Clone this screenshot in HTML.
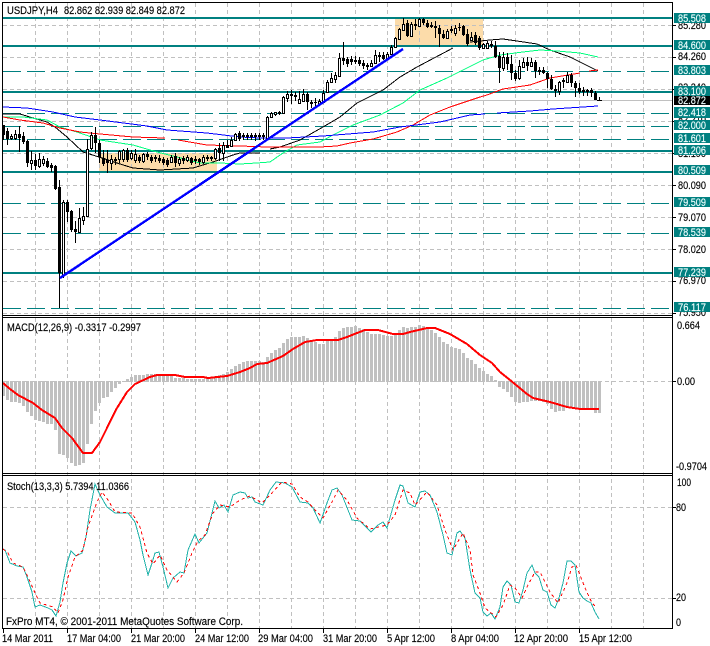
<!DOCTYPE html>
<html><head><meta charset="utf-8"><style>
html,body{margin:0;padding:0;background:#fff;width:710px;height:646px;overflow:hidden}
svg{display:block}
text{font-family:"Liberation Sans",sans-serif;font-size:11px;fill:#000;stroke:#000;stroke-width:.15}
.l text{fill:#f0ffff;stroke:#f0ffff}
</style></head><body>
<svg width="710" height="646" viewBox="0 0 710 646" xmlns="http://www.w3.org/2000/svg">
<rect width="710" height="646" fill="#fff"/>
<g fill="#fcdcaa"><rect x="395" y="18" width="88" height="27"/><rect x="99" y="153" width="118" height="18"/></g>
<g shape-rendering="crispEdges" fill="none">
<path stroke="#c0c0c0" stroke-dasharray="4 3" d="M35.5 3V628M67.5 3V628M99.5 3V628M131.5 3V628M163.5 3V628M195.5 3V628M227.5 3V628M259.5 3V628M291.5 3V628M323.5 3V628M355.5 3V628M387.5 3V628M419.5 3V628M451.5 3V628M483.5 3V628M515.5 3V628M547.5 3V628M579.5 3V628M611.5 3V628M643.5 3V628"/>
<path stroke="#c0c0c0" stroke-dasharray="4 3" d="M3 25.5H672M3 57.5H672M3 89.5H672M3 121.5H672M3 153.5H672M3 185.5H672M3 217.5H672M3 249.5H672M3 281.5H672M3 313.5H672M3 381.5H672M3 507.5H672M3 598.5H672"/>
<path stroke="#c0c0c0" d="M3 100.5H672"/>
<path stroke="#008080" stroke-width="2" d="M3 18H672M3 46H672M3 92H672M3 151H672M3 172H672M3 273H672"/>
<path stroke="#008080" stroke-dasharray="18 6" d="M3 71.5H672M3 113.5H672M3 126.5H672M3 139.5H672M3 203.5H672M3 233.5H672M3 308.5H672"/>
<path stroke="#000" d="M3 114L20 114L33 118L47 122L55 127L67 137L83 152L99 157L120 164L133 168L160 170L193 168L213 162L233 155L240 153L260 153M270 149L280 147L300 140L323 127L340 117L357 103L383 90L400 77L417 67L453 48M470 42L490 40L503 39L517 41L537 44L550 50L570 57L598 71"/>
<path stroke="#00ff7f" d="M3 117L23 117L47 120L60 127L80 133L100 140L133 145L157 152L177 157L200 163L220 163L240 164L257 163L270 162L283 153L297 145L320 142L333 135L353 125L380 115L403 103L420 90L447 78L467 68L483 60L500 55L523 52L540 50L557 51L580 53L598 57"/>
<path stroke="#f00" d="M3 117L20 120L43 123L60 128L80 132L100 134L133 137L165 138M178 140L207 145L240 146L267 147L320 147L337 146L350 143L373 139L397 132L413 125L430 115L450 107L480 97L487 95L503 89L530 85L550 78L580 73M589 71L598 70"/>
<path stroke="#00f" d="M3 107L27 108L53 112L75 117L100 120L147 126L167 130L207 133L240 137L260 138L287 138L323 136L373 132L400 127L440 122L470 115L485 114M497 113L530 111L553 109L598 106"/>
<path stroke="#000" d="M3.5 125V140M7.5 128V145M11.5 134V140M15.5 130V140M19.5 126V152M23.5 132V144M27.5 140V167M31.5 151V170M35.5 154V170M39.5 153V168M43.5 156V166M47.5 158V168M51.5 163V172M55.5 165V190M59.5 180V308M63.5 200V278M67.5 200V222M71.5 210V232M75.5 221V243M79.5 208V233M83.5 207V225M87.5 139V217M91.5 132V150M95.5 127V153M99.5 140V163M103.5 150V166M107.5 150V173M111.5 155V170M115.5 157V165M119.5 150V163M123.5 149V162M127.5 148V162M131.5 150V160M135.5 149V163M139.5 155V163M143.5 153V163M147.5 152V160M151.5 155V163M155.5 155V162M159.5 155V163M163.5 157V165M167.5 158V167M171.5 155V163M175.5 153V167M179.5 157V166M183.5 156V164M187.5 155V162M191.5 157V165M195.5 156V164M199.5 158V165M203.5 155V164M207.5 155V161M211.5 156V161M215.5 148V160M219.5 143V161M223.5 142V161M227.5 140V148M231.5 137V147M235.5 133V141M239.5 131V141M243.5 133V140M247.5 133V140M251.5 133V140M255.5 133V141M259.5 133V140M263.5 133V140M267.5 116V139M271.5 112V118M275.5 112V116M279.5 111V115M283.5 96V114M287.5 91V102M291.5 90V104M295.5 92V101M299.5 91V104M303.5 89V102M307.5 92V110M311.5 100V108M315.5 98V108M319.5 99V105M323.5 90V103M327.5 80V93M331.5 73V83M335.5 72V83M339.5 53V77M343.5 42V65M347.5 57V67M351.5 56V65M355.5 56V64M359.5 57V66M363.5 60V69M367.5 63V70M371.5 60V67M375.5 50V64M379.5 52V62M383.5 52V60M387.5 52V60M391.5 45V55M395.5 37V48M399.5 28V40M403.5 18V31M407.5 20V37M411.5 22V37M415.5 19V30M419.5 18V27M423.5 18V25M427.5 20V28M431.5 22V28M435.5 21V38M439.5 25V47M443.5 30V39M447.5 29V39M451.5 26V33M455.5 25V36M459.5 23V31M463.5 25V36M467.5 29V46M471.5 32V41M475.5 32V45M479.5 36V50M483.5 43V49M487.5 41V49M491.5 41V48M495.5 41V58M499.5 52V83M503.5 52V71M507.5 53V70M511.5 55V80M515.5 70V81M519.5 60V80M523.5 58V68M527.5 57V71M531.5 58V67M535.5 60V78M539.5 67V75M543.5 67V74M547.5 72V88M551.5 75V90M555.5 85V97M559.5 81V95M563.5 78V88M567.5 72V83M571.5 73V87M575.5 81V97M579.5 83V94M583.5 87V96M587.5 89V96M591.5 88V97M595.5 91V100M599.5 97V101M597 100.5H602"/>
<path fill="#000" stroke="none" d="M3 125h2v10h-2zM6 131h3v8h-3zM18 134h3v4h-3zM22 136h3v6h-3zM26 141h3v22h-3zM34 160h3v6h-3zM46 161h3v6h-3zM50 165h3v3h-3zM54 166h3v23h-3zM58 187h3v86h-3zM66 202h3v10h-3zM70 211h3v19h-3zM74 229h3v3h-3zM94 135h3v8h-3zM98 143h3v14h-3zM102 158h3v6h-3zM106 160h3v3h-3zM126 150h3v10h-3zM138 157h3v4h-3zM146 154h3v3h-3zM150 157h3v4h-3zM154 157h3v2h-3zM158 158h3v3h-3zM162 159h3v4h-3zM166 160h3v5h-3zM174 156h3v7h-3zM182 158h3v3h-3zM190 158h3v5h-3zM194 159h3v2h-3zM198 159h3v3h-3zM206 157h3v2h-3zM210 157h3v2h-3zM218 148h3v5h-3zM226 145h3v3h-3zM238 133h3v6h-3zM242 135h3v2h-3zM246 135h3v2h-3zM250 135h3v2h-3zM254 135h3v2h-3zM258 135h3v2h-3zM262 135h3v2h-3zM290 94h3v2h-3zM294 95h3v2h-3zM306 94h3v8h-3zM310 102h3v2h-3zM314 102h3v1h-3zM342 58h3v3h-3zM346 59h3v5h-3zM350 59h3v3h-3zM354 60h3v2h-3zM358 60h3v4h-3zM362 63h3v3h-3zM366 65h3v2h-3zM378 55h3v2h-3zM382 55h3v4h-3zM406 23h3v13h-3zM414 24h3v2h-3zM422 19h3v4h-3zM426 23h3v4h-3zM430 25h3v2h-3zM434 26h3v2h-3zM438 28h3v6h-3zM442 34h3v4h-3zM450 29h3v2h-3zM458 27h3v1h-3zM462 26h3v9h-3zM466 34h3v10h-3zM474 35h3v8h-3zM478 38h3v10h-3zM490 44h3v2h-3zM494 46h3v11h-3zM498 56h3v12h-3zM506 57h3v7h-3zM510 64h3v9h-3zM514 73h3v6h-3zM526 62h3v4h-3zM534 62h3v9h-3zM538 70h3v2h-3zM542 70h3v3h-3zM546 73h3v6h-3zM550 79h3v10h-3zM554 89h3v2h-3zM562 80h3v2h-3zM570 75h3v8h-3zM574 83h3v5h-3zM578 88h3v4h-3zM582 90h3v2h-3zM586 90h3v2h-3zM590 90h3v3h-3zM594 93h3v7h-3z"/>
<path fill="#fff" stroke="#000" d="M10.5 136.5h2v2h-2zM14.5 134.5h2v4h-2zM30.5 160.5h2v3h-2zM38.5 159.5h2v7h-2zM42.5 159.5h2v4h-2zM62.5 202.5h2v73h-2zM78.5 218.5h2v14h-2zM82.5 216.5h2v4h-2zM86.5 149.5h2v67h-2zM90.5 135.5h2v13h-2zM110.5 159.5h2v4h-2zM114.5 159.5h2v1h-2zM118.5 151.5h2v8h-2zM122.5 150.5h2v9h-2zM130.5 153.5h2v5h-2zM134.5 154.5h2v6h-2zM142.5 154.5h2v7h-2zM170.5 157.5h2v5h-2zM178.5 159.5h2v4h-2zM186.5 157.5h2v3h-2zM202.5 157.5h2v5h-2zM214.5 149.5h2v9h-2zM222.5 145.5h2v8h-2zM230.5 140.5h2v6h-2zM234.5 134.5h2v6h-2zM266.5 117.5h2v21h-2zM270.5 113.5h2v4h-2zM274.5 112.5h2v2h-2zM278.5 112.5h2v1h-2zM282.5 97.5h2v16h-2zM286.5 94.5h2v4h-2zM298.5 99.5h2v4h-2zM302.5 94.5h2v7h-2zM318.5 101.5h2v3h-2zM322.5 93.5h2v9h-2zM326.5 82.5h2v10h-2zM330.5 78.5h2v4h-2zM334.5 75.5h2v4h-2zM338.5 58.5h2v18h-2zM370.5 63.5h2v3h-2zM374.5 55.5h2v8h-2zM386.5 54.5h2v4h-2zM390.5 47.5h2v7h-2zM394.5 38.5h2v9h-2zM398.5 29.5h2v10h-2zM402.5 24.5h2v6h-2zM410.5 24.5h2v12h-2zM418.5 19.5h2v7h-2zM446.5 31.5h2v7h-2zM454.5 28.5h2v5h-2zM470.5 37.5h2v3h-2zM482.5 44.5h2v4h-2zM486.5 43.5h2v5h-2zM502.5 57.5h2v11h-2zM518.5 66.5h2v12h-2zM522.5 62.5h2v5h-2zM530.5 62.5h2v4h-2zM558.5 82.5h2v9h-2zM566.5 75.5h2v7h-2z"/>
<path stroke="#c0c0c0" stroke-width="3" d="M3.5 381V396M7.5 381V400M11.5 381V402M15.5 381V402M19.5 381V403M23.5 381V406M27.5 381V412M31.5 381V416M35.5 381V420M39.5 381V421M43.5 381V422M47.5 381V424M51.5 381V424M55.5 381V430M59.5 381V454M63.5 381V455M67.5 381V458M71.5 381V463M75.5 381V466M79.5 381V465M83.5 381V463M87.5 381V444M91.5 381V424M95.5 381V411M99.5 381V403M103.5 381V398M107.5 381V397M111.5 381V392M115.5 381V388M119.5 381V384M123.5 381V382M127.5 382V379M131.5 382V377M135.5 382V375M139.5 382V375M143.5 382V375M147.5 382V374M151.5 382V374M155.5 382V374M159.5 382V375M163.5 382V376M167.5 382V376M171.5 382V376M175.5 382V378M179.5 382V378M183.5 382V378M187.5 382V379M191.5 382V379M195.5 382V379M199.5 382V379M203.5 382V379M207.5 382V378M211.5 382V378M215.5 382V376M219.5 382V375M223.5 382V374M227.5 382V372M231.5 382V369M235.5 382V366M239.5 382V364M243.5 382V362M247.5 382V361M251.5 382V361M255.5 382V361M259.5 382V361M263.5 382V362M267.5 382V357M271.5 382V353M275.5 382V350M279.5 382V348M283.5 382V343M287.5 382V339M291.5 382V337M295.5 382V337M299.5 382V337M303.5 382V336M307.5 382V338M311.5 382V340M315.5 382V342M319.5 382V344M323.5 382V344M327.5 382V340M331.5 382V341M335.5 382V337M339.5 382V331M343.5 382V328M347.5 382V327M351.5 382V327M355.5 382V326M359.5 382V328M363.5 382V329M367.5 382V332M371.5 382V334M375.5 382V334M379.5 382V334M383.5 382V335M387.5 382V336M391.5 382V336M395.5 382V335M399.5 382V330M403.5 382V327M407.5 382V328M411.5 382V327M415.5 382V327M419.5 382V325M423.5 382V326M427.5 382V328M431.5 382V330M435.5 382V333M439.5 382V337M443.5 382V342M447.5 382V344M451.5 382V347M455.5 382V348M459.5 382V349M463.5 382V353M467.5 382V358M471.5 382V360M475.5 382V364M479.5 382V368M483.5 382V371M487.5 382V374M491.5 382V376M495.5 382V380M499.5 381V387M503.5 381V389M507.5 381V392M511.5 381V397M515.5 381V402M519.5 381V403M523.5 381V402M527.5 381V402M531.5 381V401M535.5 381V401M539.5 381V401M543.5 381V402M547.5 381V404M551.5 381V409M555.5 381V412M559.5 381V411M563.5 381V411M567.5 381V407M571.5 381V407M575.5 381V408M579.5 381V408M583.5 381V409M587.5 381V410M591.5 381V410M595.5 381V413M599.5 381V413"/>
<path stroke="#f00" stroke-width="2" d="M3 383L10 389L18 395L33 403L42 410L55 418L62 428L72 438L83 453L92 453L100 442L107 428L117 408L127 392L135 384L150 377L157 375L175 375L185 377L203 377L208 378L227 376L240 372L250 368L257 364L267 363L283 356L293 349L305 342L317 340L325 340L338 340L347 337L357 333L365 330L378 330L393 334L403 334L410 332L427 328L435 328L450 334L467 344L480 355L483 357L492 363L500 372L510 380L527 394L533 398L550 402L567 407L580 409L599 409"/>
<path stroke="#20b2aa" d="M3 549L5 550L10 563L17 566L23 567L27 577L32 592L35 607L40 605L48 608L52 610L56 616L60 602L63 583L67 563L71 551L76 556L82 553L86 537L90 510L95 484L100 495L107 507L115 513L128 513L135 522L140 540L143 555L148 575L152 563L155 553L159 552L163 567L168 588L173 578L180 572L184 573L188 550L195 534L199 543L207 533L215 501L219 508L224 505L228 512L233 495L240 492L245 493L248 498L252 497L255 502L263 505L270 490L276 482L285 483L292 487L300 502L308 503L313 508L320 523L327 503L332 490L337 488L342 495L352 520L360 521L371 532L378 525L383 522L387 528L395 500L400 485L403 486L408 503L415 507L420 492L425 491L430 495L437 512L443 535L447 553L452 555L457 533L460 531L465 538L470 570L475 593L480 598L483 612L487 616L491 613L495 619L500 607L503 587L507 581L511 585L515 602L519 603L523 590L527 573L532 565L535 573L539 577L543 590L547 592L551 605L555 608L559 598L563 583L567 561L571 561L575 565L579 592L583 598L587 601L591 603L595 612L599 619"/>
<path stroke="#f00" stroke-dasharray="3 3" d="M3 549L8 553L13 563L23 567L28 577L35 593L40 603L53 607L58 613L63 600L68 577L75 557L83 550L88 527L97 502L102 492L108 500L115 512L132 513L140 527L147 553L153 564L160 555L167 570L177 582L184 573L192 553L198 541L205 535L213 513L220 505L230 507L240 500L250 496L262 503L270 495L282 482L292 484L300 497L308 502L317 512L323 518L332 502L338 490L347 500L357 518L370 529L387 525L395 515L403 490L410 493L415 505L427 492L437 505L445 530L453 550L463 533L470 550L473 575L480 593L485 608L490 612L496 617L503 605L510 585L515 588L522 598L528 585L535 572L540 572L550 592L558 603L567 583L572 567L576 565L585 588L592 603L597 608"/>
<path stroke="#00f" stroke-width="2.4" d="M60 278L403 49"/>
<path stroke="#000" d="M2.5 2V628.5M2 2.5H672.5M672.5 2V629M2 315.5H673M2 317.5H673M2 473.5H673M2 475.5H673M2 628.5H673"/>
<path stroke="#000" d="M3.5 629V633M67.5 629V633M131.5 629V633M195.5 629V633M259.5 629V633M323.5 629V633M387.5 629V633M451.5 629V633M515.5 629V633M579.5 629V633M673 25.5H676M673 57.5H676M673 89.5H676M673 121.5H676M673 153.5H676M673 185.5H676M673 217.5H676M673 249.5H676M673 281.5H676M673 313.5H676M673 381.5H676M673 507.5H676M673 598.5H676"/>
</g>
<g>
<text x="678" y="29" textLength="28" lengthAdjust="spacingAndGlyphs">85.280</text>
<text x="678" y="60" textLength="28" lengthAdjust="spacingAndGlyphs">84.260</text>
<text x="678" y="91" textLength="28" lengthAdjust="spacingAndGlyphs">83.240</text>
<text x="678" y="123" textLength="28" lengthAdjust="spacingAndGlyphs">82.210</text>
<text x="678" y="157" textLength="28" lengthAdjust="spacingAndGlyphs">81.190</text>
<text x="678" y="189" textLength="28" lengthAdjust="spacingAndGlyphs">80.090</text>
<text x="678" y="221" textLength="28" lengthAdjust="spacingAndGlyphs">79.070</text>
<text x="678" y="253" textLength="28" lengthAdjust="spacingAndGlyphs">78.020</text>
<text x="678" y="284" textLength="28" lengthAdjust="spacingAndGlyphs">76.970</text>
<text x="678" y="316" textLength="28" lengthAdjust="spacingAndGlyphs">75.950</text>
</g>
<g shape-rendering="crispEdges" fill="#008080">
<rect x="674" y="13" width="36" height="10"/><rect x="674" y="40" width="36" height="10"/><rect x="674" y="65" width="36" height="10"/><rect x="674" y="86" width="36" height="10"/><rect x="674" y="107" width="36" height="11"/><rect x="674" y="120" width="36" height="10"/><rect x="674" y="133" width="36" height="10"/><rect x="674" y="145" width="36" height="10"/><rect x="674" y="165" width="36" height="10"/><rect x="674" y="197" width="36" height="10"/><rect x="674" y="227" width="36" height="10"/><rect x="674" y="267" width="36" height="10"/><rect x="674" y="302" width="36" height="10"/>
<rect x="674" y="96" width="36" height="9" fill="#000"/>
</g>
<g class="l">
<text x="678" y="22" textLength="28" lengthAdjust="spacingAndGlyphs">85.508</text>
<text x="678" y="49" textLength="28" lengthAdjust="spacingAndGlyphs">84.600</text>
<text x="678" y="74" textLength="28" lengthAdjust="spacingAndGlyphs">83.803</text>
<text x="678" y="95" textLength="28" lengthAdjust="spacingAndGlyphs">83.100</text>
<text x="678" y="104" textLength="28" lengthAdjust="spacingAndGlyphs">82.872</text>
<text x="678" y="116" textLength="28" lengthAdjust="spacingAndGlyphs">82.418</text>
<text x="678" y="129" textLength="28" lengthAdjust="spacingAndGlyphs">82.000</text>
<text x="678" y="142" textLength="28" lengthAdjust="spacingAndGlyphs">81.601</text>
<text x="678" y="154" textLength="28" lengthAdjust="spacingAndGlyphs">81.206</text>
<text x="678" y="174" textLength="28" lengthAdjust="spacingAndGlyphs">80.509</text>
<text x="678" y="206" textLength="28" lengthAdjust="spacingAndGlyphs">79.509</text>
<text x="678" y="236" textLength="28" lengthAdjust="spacingAndGlyphs">78.539</text>
<text x="678" y="276" textLength="28" lengthAdjust="spacingAndGlyphs">77.239</text>
<text x="678" y="311" textLength="28" lengthAdjust="spacingAndGlyphs">76.117</text>
</g>
<text x="677" y="329" textLength="23" lengthAdjust="spacingAndGlyphs">0.664</text>
<text x="677" y="385" textLength="18" lengthAdjust="spacingAndGlyphs">0.00</text>
<text x="676" y="470" textLength="31" lengthAdjust="spacingAndGlyphs">-0.9704</text>
<text x="677" y="486" textLength="14" lengthAdjust="spacingAndGlyphs">100</text>
<text x="676" y="511" textLength="10" lengthAdjust="spacingAndGlyphs">80</text>
<text x="676" y="601" textLength="10" lengthAdjust="spacingAndGlyphs">20</text>
<text x="676" y="626" textLength="5" lengthAdjust="spacingAndGlyphs">0</text>
<text x="7" y="14" textLength="51" lengthAdjust="spacingAndGlyphs">USDJPY,H4</text>
<text x="64" y="14" textLength="121" lengthAdjust="spacingAndGlyphs">82.862 82.939 82.849 82.872</text>
<text x="7" y="331" textLength="134" lengthAdjust="spacingAndGlyphs">MACD(12,26,9) -0.3317 -0.2997</text>
<text x="7" y="490" textLength="122" lengthAdjust="spacingAndGlyphs">Stoch(13,3,3) 5.7394 11.0366</text>
<text x="6" y="625" textLength="237" lengthAdjust="spacingAndGlyphs">FxPro MT4, © 2001-2011 MetaQuotes Software Corp.</text>
<g>
<text x="2" y="642" textLength="51" lengthAdjust="spacingAndGlyphs">14 Mar 2011</text>
<text x="67" y="642" textLength="54" lengthAdjust="spacingAndGlyphs">17 Mar 04:00</text>
<text x="131" y="642" textLength="54" lengthAdjust="spacingAndGlyphs">21 Mar 20:00</text>
<text x="195" y="642" textLength="54" lengthAdjust="spacingAndGlyphs">24 Mar 12:00</text>
<text x="258" y="642" textLength="55" lengthAdjust="spacingAndGlyphs">29 Mar 04:00</text>
<text x="323" y="642" textLength="54" lengthAdjust="spacingAndGlyphs">31 Mar 20:00</text>
<text x="387" y="642" textLength="48" lengthAdjust="spacingAndGlyphs">5 Apr 12:00</text>
<text x="451" y="642" textLength="48" lengthAdjust="spacingAndGlyphs">8 Apr 04:00</text>
<text x="514" y="642" textLength="54" lengthAdjust="spacingAndGlyphs">12 Apr 20:00</text>
<text x="579" y="642" textLength="53" lengthAdjust="spacingAndGlyphs">15 Apr 12:00</text>
</g>
</svg>
</body></html>
